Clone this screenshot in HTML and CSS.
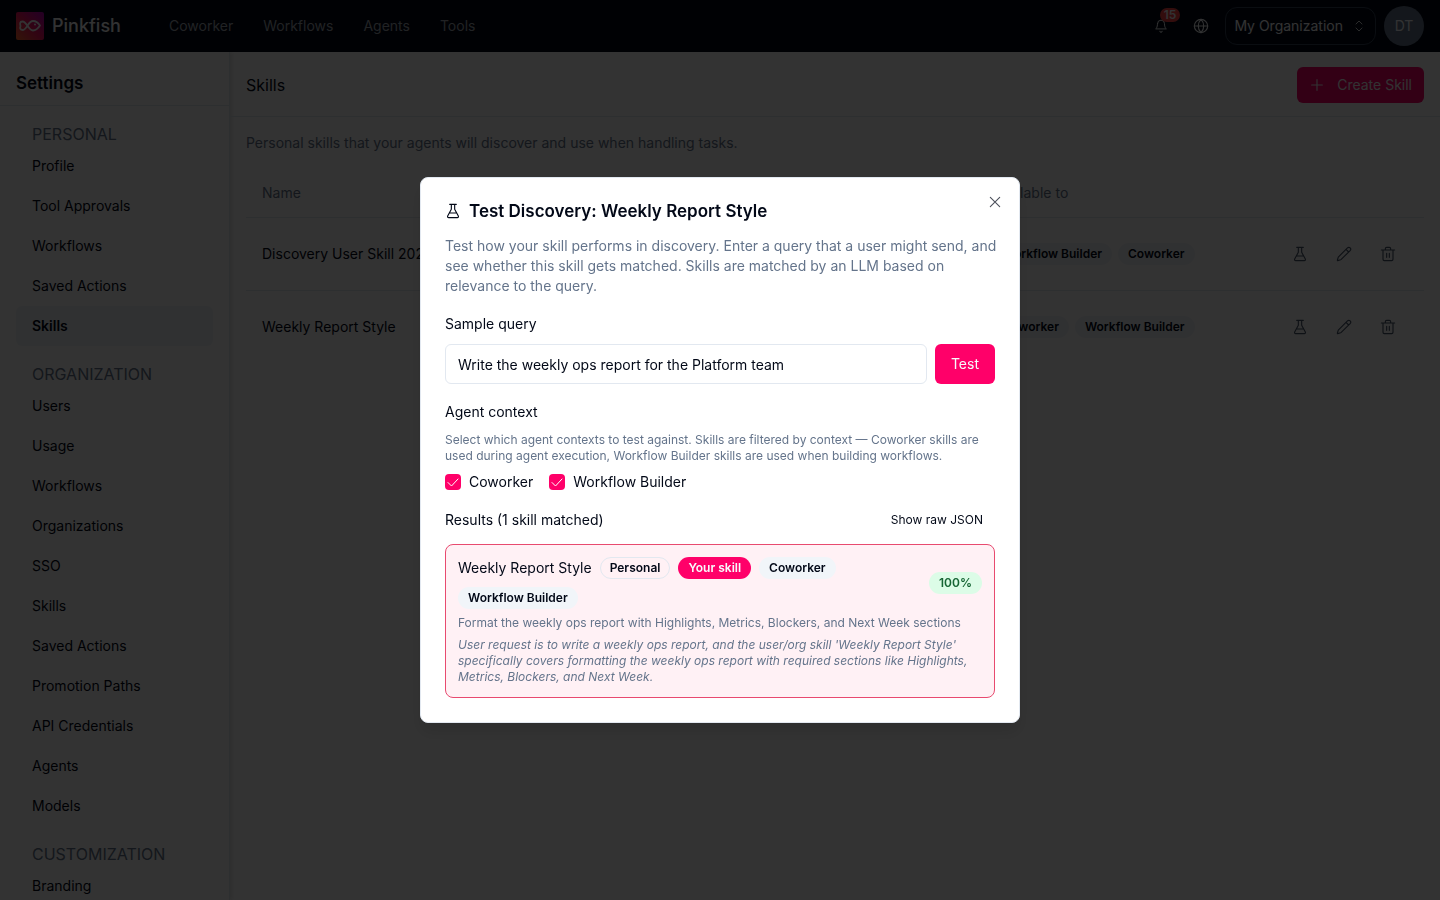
FILE: index.html
```
<!DOCTYPE html>
<html lang="en">
<head>
  <meta charset="UTF-8">
  <title>Skills - Pinkfish</title>
  <link rel="stylesheet" href="styles.css">
</head>
<body>

<!-- Shared icons -->
<svg class="sprite" aria-hidden="true">
  <symbol id="flask" viewBox="0 0 24 24">
    <path d="M7 2h10M9.500 2v7.500L4 19.500A1.700 1.700 0 0 0 5.500 22h13a1.700 1.700 0 0 0 1.500-2.500L14.500 9.500V2M7 15h10"/>
  </symbol>
  <symbol id="pencil" viewBox="0 0 24 24">
    <path d="M21.200 6.800a2.800 2.800 0 0 0-4-4L3.800 16.200a2 2 0 0 0-.5.800L2 21.400a.5.5 0 0 0 .6.600l4.400-1.300a2 2 0 0 0 .8-.5zM15 5l4 4"/>
  </symbol>
  <symbol id="trash" viewBox="0 0 24 24">
    <path d="M2 6h20M19.500 6v14a2 2 0 0 1-2 2h-11a2 2 0 0 1-2-2V6M8 6V4a2 2 0 0 1 2-2h4a2 2 0 0 1 2 2v2M10 11v6M14 11v6"/>
  </symbol>
</svg>

<div class="app">
  <header class="topbar">
    <a class="brand" href="#">
      <svg class="logo" viewBox="0 0 28 28" aria-hidden="true">
        <defs>
          <linearGradient id="logoFill" x1="0" y1="1" x2="1" y2="0">
            <stop offset="0" stop-color="#ff6a2b"/>
            <stop offset="0.5" stop-color="#f5145f"/>
            <stop offset="1" stop-color="#b000b8"/>
          </linearGradient>
        </defs>
        <rect width="28" height="28" rx="2" fill="url(#logoFill)"/>
        <path d="M24 13.500C22 10.500 19.500 9 17 9c-5 0-6 9-10.500 9C3.500 18 4 15.500 4.500 14 4 12 3.500 9.500 6.500 9.500 11 9.500 12 18.500 17 18.500c2.500 0 5-2 7-5z" fill="none" stroke="#fff" stroke-width="1.800" stroke-linejoin="round"/>
        <circle cx="19" cy="12.500" r="1" fill="#fff"/>
      </svg>
      <span>Pinkfish</span>
    </a>
    <nav class="main-nav">
      <a href="#">Coworker</a>
      <a href="#">Workflows</a>
      <a href="#">Agents</a>
      <a href="#">Tools</a>
    </nav>
    <div class="top-actions">
      <button class="icon-btn" aria-label="Notifications">
        <svg class="icon" viewBox="0 0 24 24"><path d="M6 8a6 6 0 0 1 12 0c0 7 3 9 3 9H3s3-2 3-9M10 21a2 2 0 0 0 4 0"/></svg>
        <span class="count">15</span>
      </button>
      <button class="icon-btn" aria-label="Language">
        <svg class="icon" viewBox="0 0 24 24"><circle cx="12" cy="12" r="10"/><path d="M12 2c-5.500 5.500-5.500 14.500 0 20 5.500-5.500 5.500-14.500 0-20M2 12h20"/></svg>
      </button>
      <button class="org-btn">
        My Organization
        <svg class="chevrons" viewBox="0 0 24 24"><path d="M6 8l6-6 6 6M6 16l6 6 6-6"/></svg>
      </button>
      <button class="avatar">DT</button>
    </div>
  </header>

  <div class="body">
    <aside class="sidebar">
      <h2>Settings</h2>
      <nav class="side-nav">
        <h3>PERSONAL</h3>
        <a href="#">Profile</a>
        <a href="#">Tool Approvals</a>
        <a href="#">Workflows</a>
        <a href="#">Saved Actions</a>
        <a href="#" class="active">Skills</a>
        <h3>ORGANIZATION</h3>
        <a href="#">Users</a>
        <a href="#">Usage</a>
        <a href="#">Workflows</a>
        <a href="#">Organizations</a>
        <a href="#">SSO</a>
        <a href="#">Skills</a>
        <a href="#">Saved Actions</a>
        <a href="#">Promotion Paths</a>
        <a href="#">API Credentials</a>
        <a href="#">Agents</a>
        <a href="#">Models</a>
        <h3>CUSTOMIZATION</h3>
        <a href="#">Branding</a>
      </nav>
    </aside>

    <main class="content">
      <div class="page-head">
        <h1>Skills</h1>
        <button class="create-btn">
          <svg class="icon" viewBox="0 0 24 24"><path d="M4 12h16M12 4v16"/></svg>
          Create Skill
        </button>
      </div>
      <div class="page-body">
        <p>Personal skills that your agents will discover and use when handling tasks.</p>
        <table class="skills">
          <thead>
            <tr>
              <th class="col-name">Name</th>
              <th>Available to</th>
              <th class="col-actions"></th>
            </tr>
          </thead>
          <tbody>
            <tr>
              <td>Discovery User Skill 2025</td>
              <td>
                <div class="tags">
                  <span class="badge gray">Workflow Builder</span>
                  <span class="badge gray">Coworker</span>
                </div>
              </td>
              <td>
                <div class="row-actions">
                  <button aria-label="Test"><svg class="icon"><use href="#flask"/></svg></button>
                  <button aria-label="Edit"><svg class="icon"><use href="#pencil"/></svg></button>
                  <button aria-label="Delete"><svg class="icon"><use href="#trash"/></svg></button>
                </div>
              </td>
            </tr>
            <tr>
              <td>Weekly Report Style</td>
              <td>
                <div class="tags">
                  <span class="badge gray">Coworker</span>
                  <span class="badge gray">Workflow Builder</span>
                </div>
              </td>
              <td>
                <div class="row-actions">
                  <button aria-label="Test"><svg class="icon"><use href="#flask"/></svg></button>
                  <button aria-label="Edit"><svg class="icon"><use href="#pencil"/></svg></button>
                  <button aria-label="Delete"><svg class="icon"><use href="#trash"/></svg></button>
                </div>
              </td>
            </tr>
          </tbody>
        </table>
      </div>
    </main>
  </div>
</div>

<div class="overlay">
  <div class="dialog" role="dialog" aria-modal="true" aria-labelledby="dialogTitle">
    <button class="close" aria-label="Close">
      <svg class="icon" viewBox="0 0 24 24"><path d="M19 5L5 19M5 5l14 14"/></svg>
    </button>
    <div class="dialog-head">
      <h2 id="dialogTitle"><svg class="icon"><use href="#flask"/></svg>Test Discovery: Weekly Report Style</h2>
      <p>Test how your skill performs in discovery. Enter a query that a user might send, and see whether this skill gets matched. Skills are matched by an LLM based on relevance to the query.</p>
    </div>

    <div class="field">
      <label for="query">Sample query</label>
      <div class="query-row">
        <input type="text" id="query" value="Write the weekly ops report for the Platform team">
        <button class="test-btn">Test</button>
      </div>
    </div>

    <fieldset class="context">
      <legend>Agent context</legend>
      <p>Select which agent contexts to test against. Skills are filtered by context — Coworker skills are used during agent execution, Workflow Builder skills are used when building workflows.</p>
      <div class="checks">
        <label><input type="checkbox" checked>Coworker</label>
        <label><input type="checkbox" checked>Workflow Builder</label>
      </div>
    </fieldset>

    <div class="results">
      <div class="results-head">
        <span>Results (1 skill matched)</span>
        <button>Show raw JSON</button>
      </div>
      <div class="result">
        <div class="result-top">
          <div class="result-tags">
            <span class="result-name">Weekly Report Style</span>
            <span class="badge outline">Personal</span>
            <span class="badge pink">Your skill</span>
            <span class="badge gray">Coworker</span>
            <span class="badge gray">Workflow Builder</span>
          </div>
          <span class="badge green">100%</span>
        </div>
        <p>Format the weekly ops report with Highlights, Metrics, Blockers, and Next Week sections</p>
        <p class="reason">User request is to write a weekly ops report, and the user/org skill 'Weekly Report Style' specifically covers formatting the weekly ops report with required sections like Highlights, Metrics, Blockers, and Next Week.</p>
      </div>
    </div>
  </div>
</div>

</body>
</html>
```
FILE: styles.css
```
* {
  box-sizing: border-box;
}
body {
  margin: 0;
  font-family: Inter, "Liberation Sans", sans-serif;
  font-size: 14px;
  line-height: 20px;
  color: #020817;
  background: #fff;
}
h1, h2, h3, p {
  margin: 0;
  font-weight: 400;
}
a {
  color: inherit;
  text-decoration: none;
}
button, input {
  font: inherit;
  color: inherit;
}
button {
  padding: 0;
  border: none;
  background: none;
  cursor: pointer;
}
.sprite {
  display: none;
}
.icon, .chevrons {
  display: block;
  flex: none;
  width: 16px;
  height: 16px;
  fill: none;
  stroke: currentColor;
  stroke-width: 1.7;
  stroke-linecap: round;
  stroke-linejoin: round;
}
.chevrons {
  width: 12px;
  height: 12px;
}
.app {
  display: flex;
  flex-direction: column;
  height: 100vh;
  overflow: hidden;
}

/* top bar */
.topbar {
  display: flex;
  align-items: center;
  flex: none;
  height: 52px;
  padding: 0 16px;
  background: #020817;
  color: #f8fafc;
}
.brand {
  display: flex;
  align-items: center;
  gap: 8px;
  font-size: 18px;
  font-weight: 500;
}
.logo {
  width: 28px;
  height: 28px;
}
.main-nav {
  display: flex;
  gap: 30px;
  margin-left: 48px;
  color: #a3a9b3;
}
.top-actions {
  display: flex;
  align-items: center;
  gap: 8px;
  margin-left: auto;
}
.icon-btn {
  position: relative;
  display: flex;
  align-items: center;
  justify-content: center;
  width: 32px;
  height: 32px;
}
.icon-btn:first-child .icon {
  width: 14px;
  height: 14px;
}
.count {
  position: absolute;
  top: -2px;
  right: -3px;
  padding: 0 4px;
  border-radius: 8px;
  background: #ff4444;
  font-size: 12px;
  font-weight: 600;
  line-height: 14px;
}
.org-btn {
  display: flex;
  align-items: center;
  gap: 10px;
  height: 38px;
  padding: 0 10px 0 8px;
  border: 1px solid #334155;
  border-radius: 12px;
}
.avatar {
  width: 40px;
  height: 40px;
  border-radius: 50%;
  background: #64748b;
}

/* sidebar */
.body {
  display: flex;
  flex: 1;
  min-height: 0;
}
.sidebar {
  flex: none;
  width: 230px;
  border-right: 1px solid #e2e8f0;
  box-shadow: 2px 0 4px rgba(0,0,0,0.1);
  overflow: hidden;
}
.sidebar h2 {
  padding: 21px 16px 12px;
  border-bottom: 1px solid #e2e8f0;
  font-size: 17px;
  font-weight: 600;
}
.side-nav {
  display: flex;
  flex-direction: column;
  padding: 16px 16px 0;
}
.side-nav h3 {
  padding: 0 16px;
  font-size: 16px;
  line-height: 24px;
  color: #64748b;
}
.side-nav a + h3 {
  margin-top: 16px;
}
.side-nav a {
  padding: 10px 16px;
  border-radius: 6px;
}
.side-nav .active {
  background: #f1f5f9;
  font-weight: 600;
}

/* skills page */
.content {
  flex: 1;
  min-width: 0;
}
.page-head {
  display: flex;
  align-items: center;
  justify-content: space-between;
  height: 65px;
  padding: 2px 16px 0;
  border-bottom: 1px solid #e2e8f0;
}
.page-head h1 {
  font-size: 16px;
}
.create-btn {
  display: flex;
  align-items: center;
  gap: 12px;
  height: 36px;
  padding: 0 12px;
  border-radius: 6px;
  background: #ff0069;
  color: #f8fafc;
}
.page-body {
  padding: 16px;
  color: #64748b;
}
.skills {
  width: 100%;
  margin-top: 16px;
  border-collapse: collapse;
}
.skills th {
  height: 48px;
  padding: 0 16px;
  font-weight: 400;
  text-align: left;
}
.skills td {
  height: 73px;
  padding: 0 16px;
  color: #020817;
}
.skills tr {
  border-bottom: 1px solid #e2e8f0;
}
.skills tbody tr:last-child {
  border-bottom: none;
}
.col-name {
  width: 62%;
}
.col-actions {
  width: 180px;
}
.tags {
  display: flex;
  gap: 6px;
}
.row-actions {
  display: flex;
  gap: 4px;
  justify-content: flex-end;
}
.row-actions button {
  padding: 12px;
  color: #475569;
}
.badge {
  display: inline-block;
  padding: 2px 9px;
  border: 1px solid transparent;
  border-radius: 11px;
  font-size: 12px;
  font-weight: 600;
  line-height: 16px;
  white-space: nowrap;
}
.gray {
  background: #f1f5f9;
}
.outline {
  border-color: #e2e8f0;
}
.pink {
  background: #ff0069;
  color: #f8fafc;
}
.green {
  background: #dcfce7;
  color: #166534;
}

/* dialog */
.overlay {
  position: fixed;
  inset: 0;
  display: flex;
  align-items: center;
  justify-content: center;
  background: rgba(0,0,0,0.8);
}
.dialog {
  position: relative;
  display: flex;
  flex-direction: column;
  gap: 16px;
  width: 100%;
  max-width: 600px;
  padding: 24px;
  border: 1px solid #e2e8f0;
  border-radius: 8px;
  background: #fff;
  box-shadow: 0 10px 15px rgba(0,0,0,0.1);
}
.close {
  position: absolute;
  top: 16px;
  right: 16px;
  opacity: 0.7;
}
.dialog-head p {
  margin: 16px -8px 0 0;
  color: #64748b;
}
.dialog-head h2 {
  display: flex;
  align-items: center;
  gap: 8px;
  font-size: 17px;
  font-weight: 600;
  line-height: 18px;
}
.field {
  display: flex;
  flex-direction: column;
  gap: 10px;
  padding-top: 2px;
}
.query-row {
  display: flex;
  gap: 8px;
}
.query-row input {
  flex: 1;
  min-width: 0;
  height: 40px;
  padding: 0 12px;
  border: 1px solid #e2e8f0;
  border-radius: 6px;
}
.test-btn {
  padding: 0 16px;
  border-radius: 6px;
  background: #ff0069;
  color: #f8fafc;
}
.context {
  margin: 2px 0 0;
  padding: 0;
  border: none;
  min-width: 0;
}
.context legend {
  padding: 0;
}
.context p, .result p {
  font-size: 12px;
  line-height: 16px;
  color: #64748b;
}
.context p {
  margin-top: 10px;
}
.checks {
  display: flex;
  gap: 16px;
  margin-top: 8px;
}
.checks label {
  display: flex;
  align-items: center;
  gap: 8px;
}
.checks input {
  appearance: none;
  width: 16px;
  height: 16px;
  margin: 0;
  border-radius: 4px;
  background: #ff0069 url("data:image/svg+xml,%3Csvg xmlns='http://www.w3.org/2000/svg' viewBox='0 0 16 16' fill='none' stroke='white' stroke-linecap='round' stroke-linejoin='round'%3E%3Cpath d='M3 8.500l3.500 3.500L13 5'/%3E%3C/svg%3E");
}
.results-head {
  display: flex;
  align-items: center;
  justify-content: space-between;
}
.results-head button {
  padding: 2px 12px;
  font-size: 12px;
}
.result {
  margin-top: 12px;
  padding: 12px;
  border: 1px solid #e84a6f;
  border-radius: 8px;
  background: #fff1f5;
}
.result-top {
  display: flex;
  align-items: center;
  justify-content: space-between;
  gap: 8px;
}
.result-tags {
  display: flex;
  flex-wrap: wrap;
  align-items: center;
  gap: 8px;
}
.result p {
  margin-top: 6px;
}
.result .reason {
  font-style: italic;
}
```
